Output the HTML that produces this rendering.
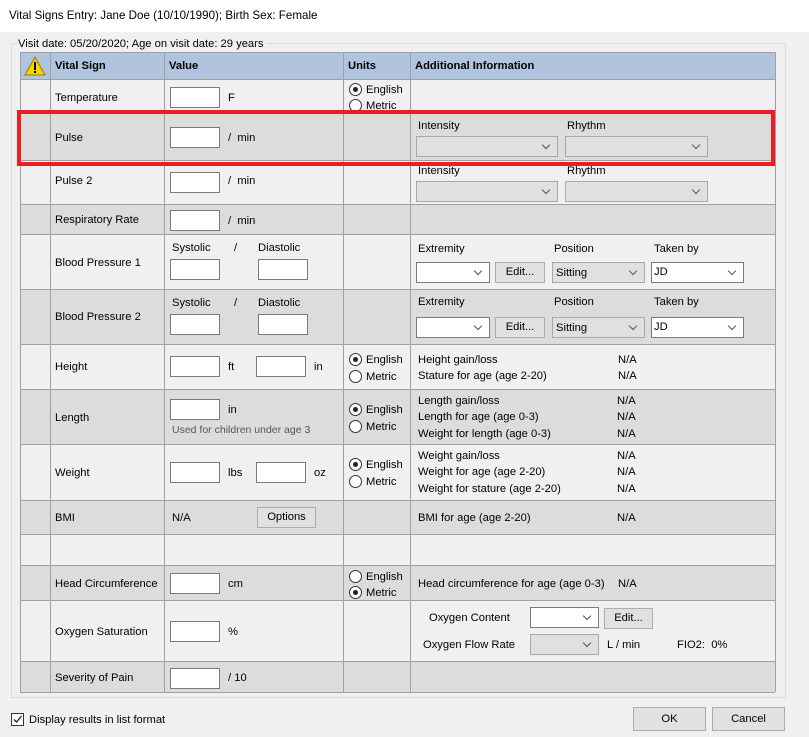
<!DOCTYPE html>
<html><head><meta charset="utf-8"><style>
*{box-sizing:border-box;margin:0;padding:0}
body{width:809px;height:737px;background:#f0f0f0;font-family:"Liberation Sans",sans-serif;font-size:11.2px;color:#000;position:relative;overflow:hidden}
.a{position:absolute;white-space:nowrap;line-height:14px}
.row{position:absolute;left:20px;width:755px;border-bottom:1px solid #a0a0a0}
.vl{position:absolute;top:52px;height:640px;width:1px;background:#a0a0a0}
.in{position:absolute;width:50px;height:21px;background:#fff;border:1px solid #7a7a7a}
.sel{position:absolute;height:21px;border:1px solid #7a7a7a;background:#fff}
.sel.d{background:#e0e0e0;border-color:#a8a8a8}
.sel::after{content:"";position:absolute;right:8px;top:5px;width:5px;height:5px;border-right:1px solid #555;border-bottom:1px solid #555;transform:rotate(45deg)}
.btn{position:absolute;height:21px;background:#e1e1e1;border:1px solid #adadad;text-align:center;line-height:19px}
.r{position:absolute;width:13px;height:13px;border:1px solid #333;border-radius:50%;background:#fff}
.r.on::after{content:"";position:absolute;left:3px;top:3px;width:5px;height:5px;border-radius:50%;background:#222}
.g{color:#555}
</style></head><body>
<div style="position:absolute;left:0;top:0;width:809px;height:32px;background:#fff"></div>
<div class="a" style="left:9px;top:9px;font-size:11.6px">Vital Signs Entry: Jane Doe (10/10/1990); Birth Sex: Female</div>
<div style="position:absolute;left:11px;top:43px;width:775px;height:655px;border:1px solid #dcdcdc"></div>
<div class="a" style="left:18px;top:37px;background:#f0f0f0;padding-right:3px">Visit date: 05/20/2020; Age on visit date: 29 years</div>

<div class="row" style="top:52px;height:28px;background:#b0c4de;border-top:1px solid #a0a0a0"></div>
<div class="row" style="top:80px;height:34px;background:#f0f0f0"></div>
<div class="row" style="top:114px;height:47px;background:#dcdcdc"></div>
<div class="row" style="top:161px;height:44px;background:#f0f0f0"></div>
<div class="row" style="top:205px;height:30px;background:#dcdcdc"></div>
<div class="row" style="top:235px;height:55px;background:#f0f0f0"></div>
<div class="row" style="top:290px;height:55px;background:#dcdcdc"></div>
<div class="row" style="top:345px;height:45px;background:#f0f0f0"></div>
<div class="row" style="top:390px;height:55px;background:#dcdcdc"></div>
<div class="row" style="top:445px;height:56px;background:#f0f0f0"></div>
<div class="row" style="top:501px;height:34px;background:#dcdcdc"></div>
<div class="row" style="top:535px;height:31px;background:#f0f0f0"></div>
<div class="row" style="top:566px;height:35px;background:#dcdcdc"></div>
<div class="row" style="top:601px;height:61px;background:#f0f0f0"></div>
<div class="row" style="top:662px;height:31px;background:#dcdcdc"></div>
<div class="vl" style="left:20px"></div><div class="vl" style="left:50px"></div><div class="vl" style="left:164px"></div><div class="vl" style="left:343px"></div><div class="vl" style="left:410px"></div><div class="vl" style="left:775px"></div>

<svg style="position:absolute;left:24px;top:56px" width="22" height="20"><polygon points="11,1 21,19 1,19" fill="#f5d400" stroke="#9a7a00"/><rect x="10" y="6" width="2" height="8" fill="#000"/><rect x="10" y="15" width="2" height="2" fill="#000"/></svg>
<div class="a" style="left:55px;top:59px;font-weight:bold">Vital Sign</div>
<div class="a" style="left:169px;top:59px;font-weight:bold">Value</div>
<div class="a" style="left:348px;top:59px;font-weight:bold">Units</div>
<div class="a" style="left:415px;top:59px;font-weight:bold">Additional Information</div>

<div class="a" style="left:55px;top:91px">Temperature</div><div class="in" style="left:170px;top:87px"></div><div class="a" style="left:228px;top:91px">F</div>
<div class="r on" style="left:349px;top:83px"></div><div class="a" style="left:366px;top:83px">English</div>
<div class="r" style="left:349px;top:99px"></div><div class="a" style="left:366px;top:99px">Metric</div>

<div class="a" style="left:55px;top:131px">Pulse</div><div class="in" style="left:170px;top:127px"></div><div class="a" style="left:228px;top:131px">/ &nbsp;min</div>
<div class="a" style="left:418px;top:119px">Intensity</div><div class="a" style="left:567px;top:119px">Rhythm</div>
<div class="sel d" style="left:416px;top:136px;width:142px"></div><div class="sel d" style="left:565px;top:136px;width:143px"></div>

<div class="a" style="left:55px;top:174px">Pulse 2</div><div class="in" style="left:170px;top:172px"></div><div class="a" style="left:228px;top:174px">/ &nbsp;min</div>
<div class="a" style="left:418px;top:164px">Intensity</div><div class="a" style="left:567px;top:164px">Rhythm</div>
<div class="sel d" style="left:416px;top:181px;width:142px"></div><div class="sel d" style="left:565px;top:181px;width:143px"></div>

<div class="a" style="left:55px;top:213px">Respiratory Rate</div><div class="in" style="left:170px;top:210px"></div><div class="a" style="left:228px;top:214px">/ &nbsp;min</div>

<div class="a" style="left:55px;top:256px">Blood Pressure 1</div>
<div class="a" style="left:172px;top:241px">Systolic</div><div class="a" style="left:234px;top:241px">/</div><div class="a" style="left:258px;top:241px">Diastolic</div>
<div class="in" style="left:170px;top:259px"></div><div class="in" style="left:258px;top:259px"></div>
<div class="a" style="left:418px;top:242px">Extremity</div><div class="a" style="left:554px;top:242px">Position</div><div class="a" style="left:654px;top:242px">Taken by</div>
<div class="sel" style="left:416px;top:262px;width:74px"></div><div class="btn" style="left:495px;top:262px;width:50px">Edit...</div>
<div class="sel d" style="left:552px;top:262px;width:93px"><span class="a" style="left:3px;top:3px">Sitting</span></div>
<div class="sel" style="left:651px;top:262px;width:93px"><span class="a" style="left:2px;top:2px">JD</span></div>

<div class="a" style="left:55px;top:310px">Blood Pressure 2</div>
<div class="a" style="left:172px;top:296px">Systolic</div><div class="a" style="left:234px;top:296px">/</div><div class="a" style="left:258px;top:296px">Diastolic</div>
<div class="in" style="left:170px;top:314px"></div><div class="in" style="left:258px;top:314px"></div>
<div class="a" style="left:418px;top:295px">Extremity</div><div class="a" style="left:554px;top:295px">Position</div><div class="a" style="left:654px;top:295px">Taken by</div>
<div class="sel" style="left:416px;top:317px;width:74px"></div><div class="btn" style="left:495px;top:317px;width:50px">Edit...</div>
<div class="sel d" style="left:552px;top:317px;width:93px"><span class="a" style="left:3px;top:3px">Sitting</span></div>
<div class="sel" style="left:651px;top:317px;width:93px"><span class="a" style="left:2px;top:2px">JD</span></div>

<div class="a" style="left:55px;top:360px">Height</div><div class="in" style="left:170px;top:356px"></div><div class="a" style="left:228px;top:360px">ft</div><div class="in" style="left:256px;top:356px"></div><div class="a" style="left:314px;top:360px">in</div>
<div class="r on" style="left:349px;top:353px"></div><div class="a" style="left:366px;top:353px">English</div>
<div class="r" style="left:349px;top:370px"></div><div class="a" style="left:366px;top:370px">Metric</div>
<div class="a" style="left:418px;top:353px">Height gain/loss</div><div class="a" style="left:618px;top:353px">N/A</div>
<div class="a" style="left:418px;top:369px">Stature for age (age 2-20)</div><div class="a" style="left:618px;top:369px">N/A</div>

<div class="a" style="left:55px;top:411px">Length</div><div class="in" style="left:170px;top:399px"></div><div class="a" style="left:228px;top:403px">in</div>
<div class="a g" style="left:172px;top:423px;font-size:10.5px">Used for children under age 3</div>
<div class="r on" style="left:349px;top:403px"></div><div class="a" style="left:366px;top:403px">English</div>
<div class="r" style="left:349px;top:420px"></div><div class="a" style="left:366px;top:420px">Metric</div>
<div class="a" style="left:418px;top:394px">Length gain/loss</div><div class="a" style="left:617px;top:394px">N/A</div>
<div class="a" style="left:418px;top:410px">Length for age (age 0-3)</div><div class="a" style="left:617px;top:410px">N/A</div>
<div class="a" style="left:418px;top:427px">Weight for length (age 0-3)</div><div class="a" style="left:617px;top:427px">N/A</div>

<div class="a" style="left:55px;top:466px">Weight</div><div class="in" style="left:170px;top:462px"></div><div class="a" style="left:228px;top:466px">lbs</div><div class="in" style="left:256px;top:462px"></div><div class="a" style="left:314px;top:466px">oz</div>
<div class="r on" style="left:349px;top:458px"></div><div class="a" style="left:366px;top:458px">English</div>
<div class="r" style="left:349px;top:475px"></div><div class="a" style="left:366px;top:475px">Metric</div>
<div class="a" style="left:418px;top:449px">Weight gain/loss</div><div class="a" style="left:617px;top:449px">N/A</div>
<div class="a" style="left:418px;top:465px">Weight for age (age 2-20)</div><div class="a" style="left:617px;top:465px">N/A</div>
<div class="a" style="left:418px;top:482px">Weight for stature (age 2-20)</div><div class="a" style="left:617px;top:482px">N/A</div>

<div class="a" style="left:55px;top:511px">BMI</div><div class="a" style="left:172px;top:511px">N/A</div>
<div class="btn" style="left:257px;top:507px;width:59px;background:#e1e1e1">Options</div>
<div class="a" style="left:418px;top:511px">BMI for age (age 2-20)</div><div class="a" style="left:617px;top:511px">N/A</div>

<div class="a" style="left:55px;top:577px">Head Circumference</div><div class="in" style="left:170px;top:573px"></div><div class="a" style="left:228px;top:577px">cm</div>
<div class="r" style="left:349px;top:570px"></div><div class="a" style="left:366px;top:570px">English</div>
<div class="r on" style="left:349px;top:586px"></div><div class="a" style="left:366px;top:586px">Metric</div>
<div class="a" style="left:418px;top:577px">Head circumference for age (age 0-3)</div><div class="a" style="left:618px;top:577px">N/A</div>

<div class="a" style="left:55px;top:625px">Oxygen Saturation</div><div class="in" style="left:170px;top:621px"></div><div class="a" style="left:228px;top:625px">%</div>
<div class="a" style="left:429px;top:611px">Oxygen Content</div><div class="sel" style="left:530px;top:607px;width:69px"></div><div class="btn" style="left:604px;top:608px;width:49px">Edit...</div>
<div class="a" style="left:423px;top:638px">Oxygen Flow Rate</div><div class="sel d" style="left:530px;top:634px;width:69px"></div>
<div class="a" style="left:607px;top:638px">L / min</div><div class="a" style="left:677px;top:638px">FIO2: &nbsp;0%</div>

<div class="a" style="left:55px;top:671px">Severity of Pain</div><div class="in" style="left:170px;top:668px"></div><div class="a" style="left:228px;top:671px">/ 10</div>

<div style="position:absolute;left:17px;top:110px;width:758px;height:56px;border:4px solid #ec1c24"></div>

<div style="position:absolute;left:11px;top:713px;width:13px;height:13px;border:1px solid #333;background:#fff"></div>
<svg style="position:absolute;left:12px;top:714px" width="11" height="11"><path d="M2 5.5 L4.5 8 L9.5 2" stroke="#222" stroke-width="1.3" fill="none"/></svg>
<div class="a" style="left:29px;top:713px">Display results in list format</div>
<div class="btn" style="left:633px;top:707px;width:73px;height:24px;line-height:22px">OK</div>
<div class="btn" style="left:712px;top:707px;width:73px;height:24px;line-height:22px">Cancel</div>
</body></html>
